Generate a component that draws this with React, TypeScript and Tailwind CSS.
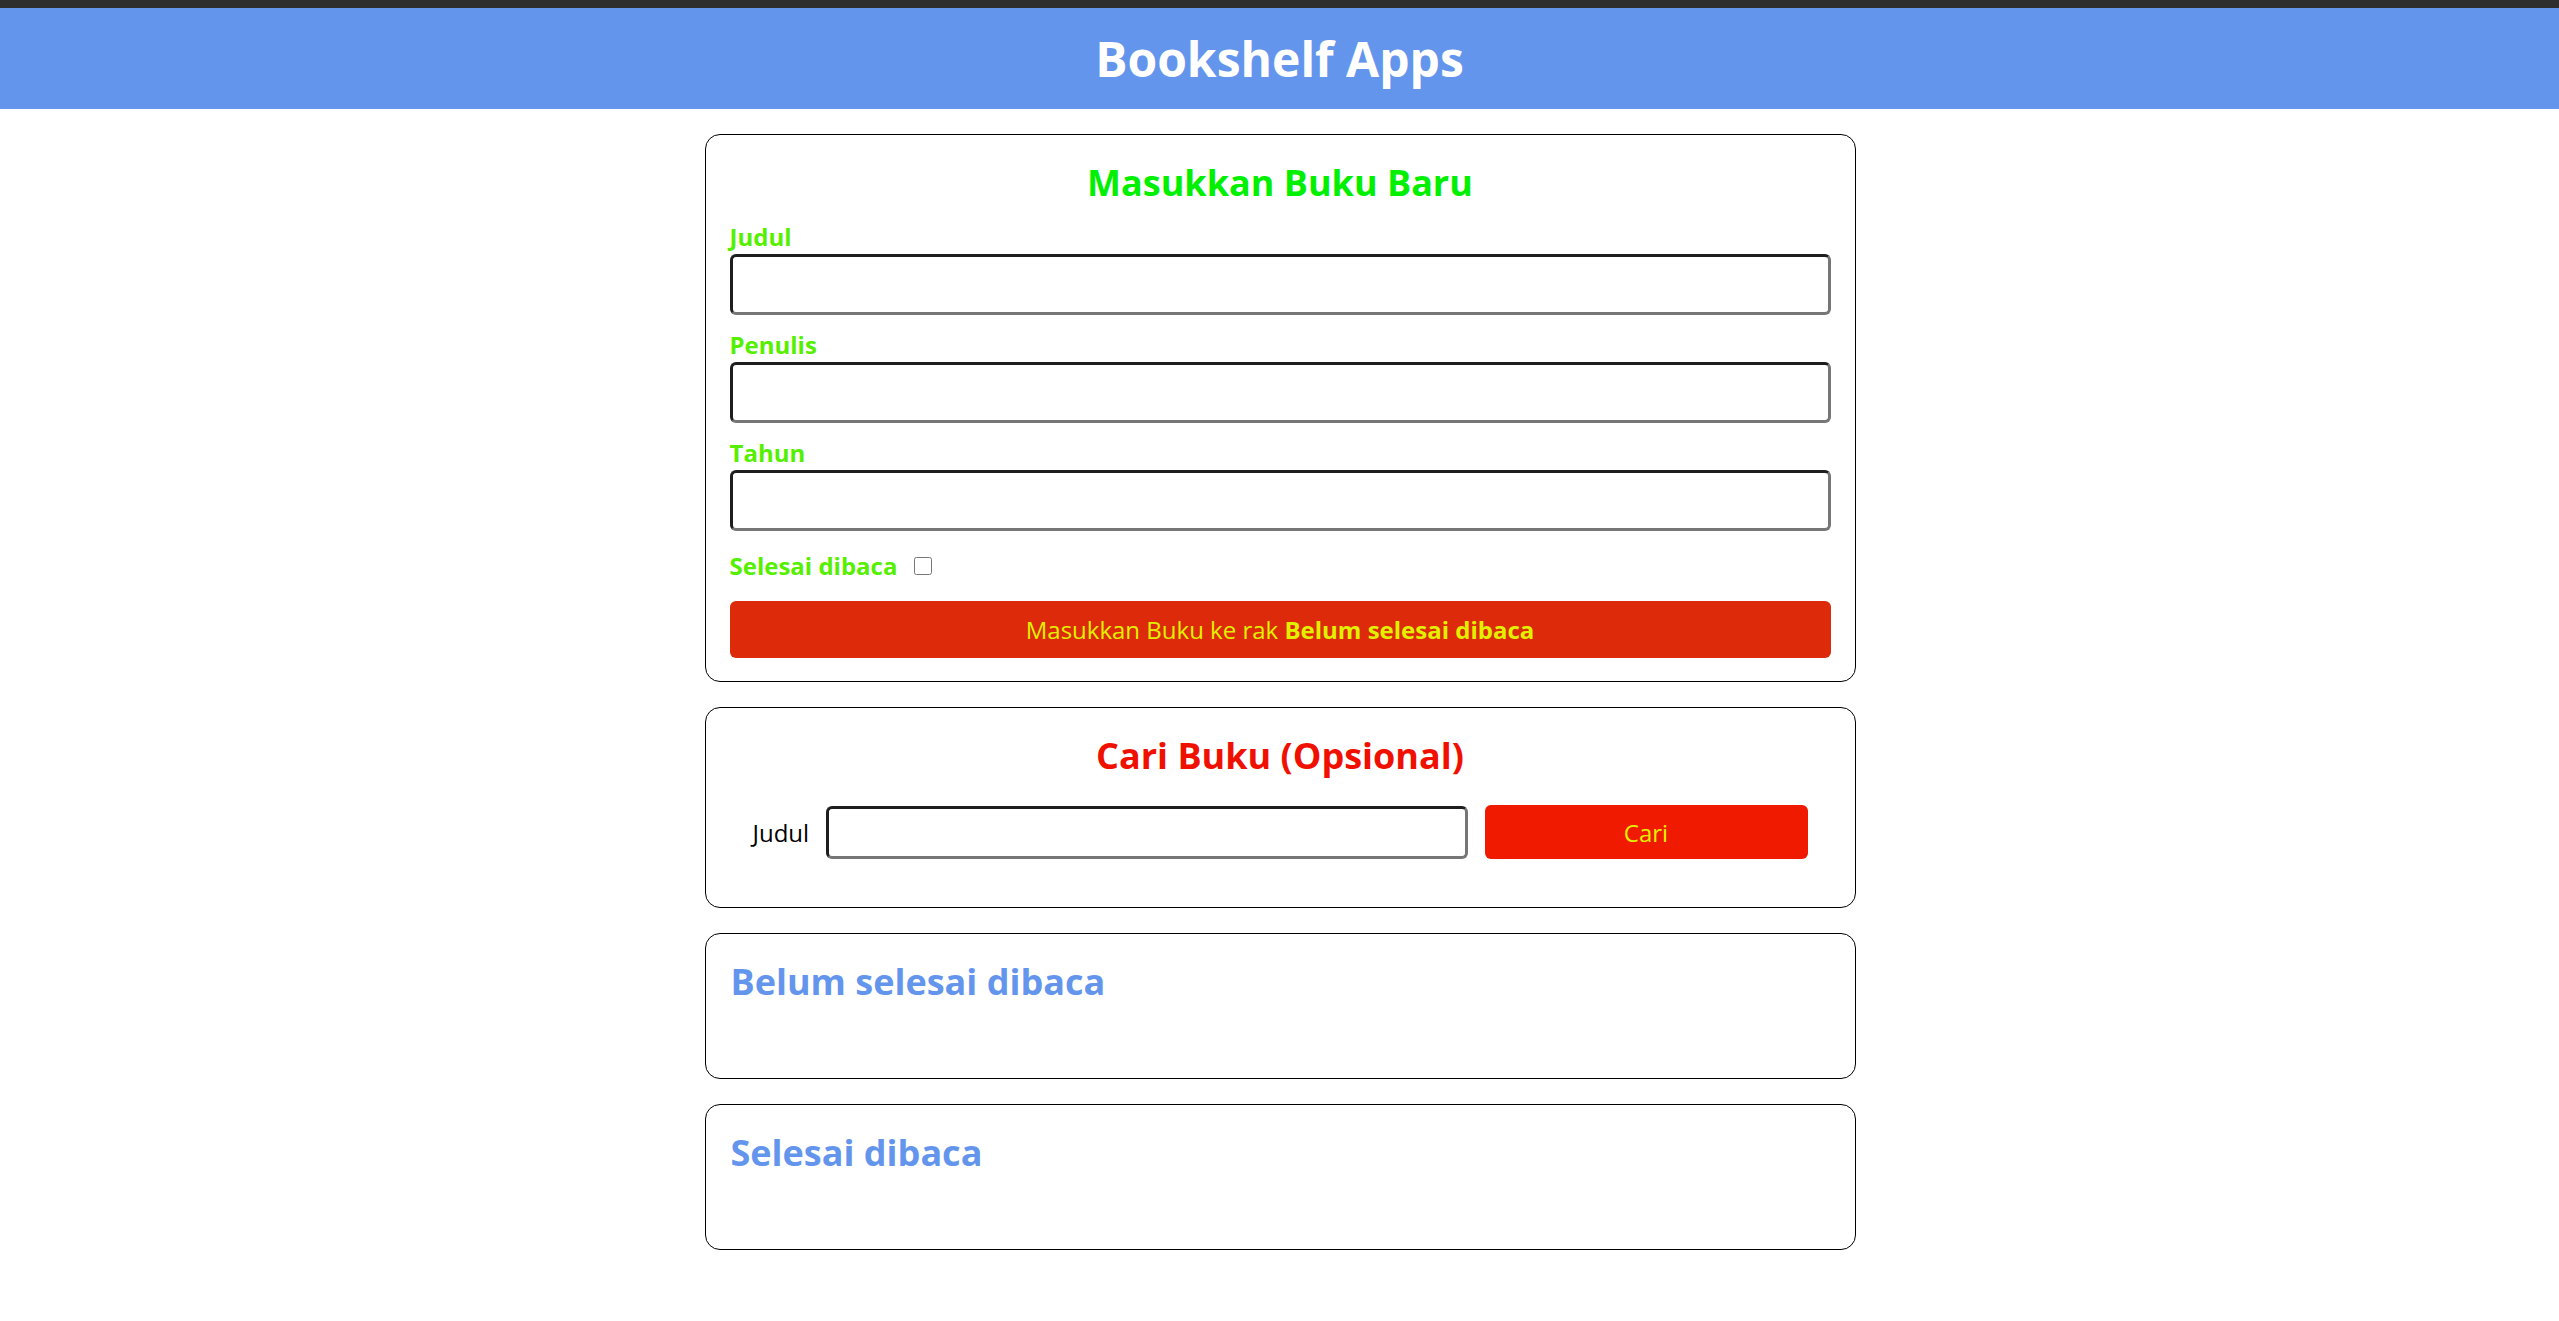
import React, { useState } from "react";

const inputCls =
  "block w-full bg-white rounded-[6px] border-[3px] border-solid border-t-[#1e1e1e] border-l-[#1e1e1e] border-r-[#767676] border-b-[#767676] px-2 text-[24px] outline-none";

function Field({ label, id }: { label: string; id: string }) {
  return (
    <div>
      <label htmlFor={id} className="block text-[24px] leading-[33px] font-bold text-[#55f000]">
        {label}
      </label>
      <input id={id} type="text" className={`${inputCls} mt-px h-[61px]`} />
    </div>
  );
}

export default function App() {
  const [done, setDone] = useState(false);

  return (
    <div className="min-h-screen bg-white font-['Open_Sans',sans-serif] text-black">
      <div className="h-[8px] bg-[#2e2e2e]" />
      <header className="h-[101px] bg-[#6495ed] flex items-center justify-center">
        <h1 className="text-[48px] leading-[65px] font-bold text-white">Bookshelf Apps</h1>
      </header>

      <main className="w-[1152px] mx-auto pl-px pt-[25px] pb-[40px] flex flex-col gap-[25px]">
        {/* Input form */}
        <section className="border border-black rounded-[15px] pl-[24px] pr-[24px] pt-[23px] pb-[23px]">
          <h2 className="text-[36px] leading-[49px] font-bold text-center text-[#00f000]">
            Masukkan Buku Baru
          </h2>
          <form className="mt-[13px]" onSubmit={(e) => e.preventDefault()}>
            <div className="flex flex-col gap-[13px]">
              <Field label="Judul" id="inputBookTitle" />
              <Field label="Penulis" id="inputBookAuthor" />
              <Field label="Tahun" id="inputBookYear" />
            </div>
            <div className="mt-[18px] flex items-center h-[33px]">
              <label htmlFor="inputBookIsComplete" className="text-[24px] leading-[33px] font-bold text-[#55f000]">
                Selesai dibaca
              </label>
              <input
                id="inputBookIsComplete"
                type="checkbox"
                checked={done}
                onChange={(e) => setDone(e.target.checked)}
                className="ml-[17px] w-[18px] h-[18px] mt-[1px]"
              />
            </div>
            <button
              type="submit"
              className="mt-[19px] block w-full h-[57px] rounded-[6px] bg-[#dc2a0a] text-[24px] leading-[33px] text-[#e0f000]"
            >
              Masukkan Buku ke rak <span className="font-bold">{done ? "Selesai dibaca" : "Belum selesai dibaca"}</span>
            </button>
          </form>
        </section>

        {/* Search */}
        <section className="border border-black rounded-[15px] pt-[23px] pb-[48px]">
          <h2 className="text-[36px] leading-[49px] font-bold text-center text-[#f01000]">
            Cari Buku (Opsional)
          </h2>
          <form className="mt-[25px] pl-[47px] flex items-center" onSubmit={(e) => e.preventDefault()}>
            <label htmlFor="searchBookTitle" className="text-[24px] leading-[33px] w-[56px]">
              Judul
            </label>
            <input id="searchBookTitle" type="text" className={`${inputCls} ml-[17px] !w-[642px] h-[53px]`} />
            <button
              type="submit"
              className="ml-[17px] w-[323px] h-[54px] rounded-[6px] bg-[#f01a00] text-[24px] leading-[33px] text-[#e0f000]"
            >
              Cari
            </button>
          </form>
        </section>

        {/* Shelves */}
        <section className="border border-black rounded-[15px] pl-[25px] pt-[23px] pb-[72px]">
          <h2 className="text-[36px] leading-[49px] font-bold text-[#6495ed]">Belum selesai dibaca</h2>
          <div id="incompleteBookshelfList" />
        </section>

        <section className="border border-black rounded-[15px] pl-[25px] pt-[23px] pb-[72px]">
          <h2 className="text-[36px] leading-[49px] font-bold text-[#6495ed]">Selesai dibaca</h2>
          <div id="completeBookshelfList" />
        </section>
      </main>
    </div>
  );
}
